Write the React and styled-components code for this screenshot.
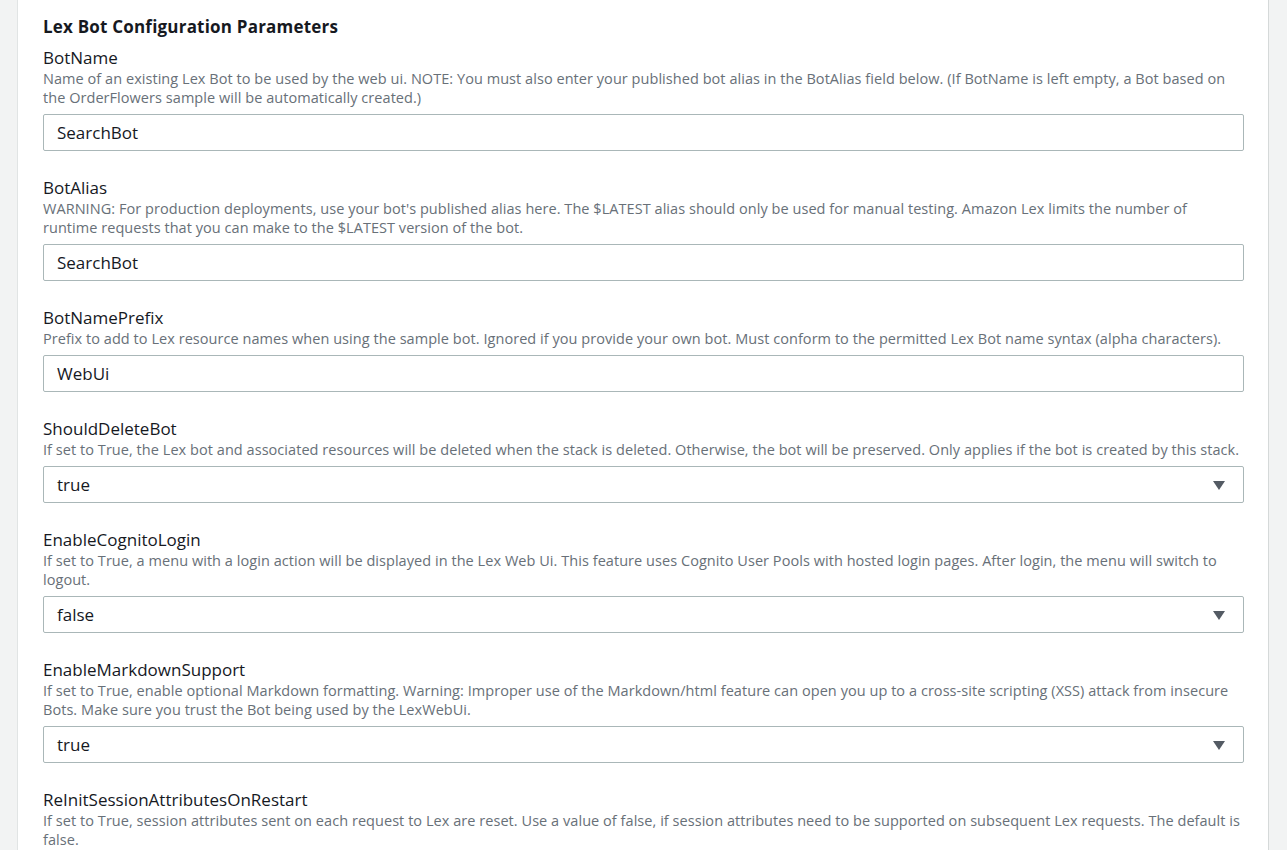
import styled, { createGlobalStyle } from "styled-components";

const GlobalStyle = createGlobalStyle`
  html, body {
    margin: 0;
    padding: 0;
    background: #f2f3f3;
    font-family: "Open Sans", "Noto Sans", sans-serif;
  }
`;

const Page = styled.div`
  display: flex;
  height: 850px;
  overflow: hidden;
  background-color: #f2f3f3;
  background-image: radial-gradient(#fafafa 0.6px, transparent 0.6px);
  background-size: 4px 4px;
`;

const Gutter = styled.div`
  width: ${(p) => p.$w}px;
  flex-shrink: 0;
`;

const Panel = styled.div`
  flex: 1;
  background: #ffffff;
  border-left: 1px solid #e1e4e4;
  border-right: 1px solid #d5d9d9;
  padding: 16px 24px 0 25px;
`;

const Title = styled.h2`
  margin: 0 0 9px;
  font-size: 17px;
  line-height: 22px;
  font-weight: 700;
  letter-spacing: 0.2px;
  color: #16191f;
`;

const Field = styled.div`
  margin-bottom: 26px;
`;

const Label = styled.div`
  font-size: 17px;
  line-height: 22px;
  color: #16191f;
`;

const Description = styled.div`
  font-size: 14.5px;
  line-height: 19px;
  color: #687078;
  letter-spacing: 0.05px;
  margin-bottom: 7px;
`;

const Box = styled.div`
  position: relative;
  display: flex;
  align-items: center;
  height: 37px;
  box-sizing: border-box;
  border: 1px solid #aab7b8;
  border-radius: 2px;
  padding: 0 13px;
  font-size: 17px;
  color: #16191f;
`;

const Arrow = styled.span`
  position: absolute;
  right: 18px;
  top: 50%;
  margin-top: -4px;
  width: 0;
  height: 0;
  border-left: 6px solid transparent;
  border-right: 6px solid transparent;
  border-top: 9px solid #545b64;
`;

const params = [
  {
    name: "BotName",
    desc: "Name of an existing Lex Bot to be used by the web ui. NOTE: You must also enter your published bot alias in the BotAlias field below. (If BotName is left empty, a Bot based on the OrderFlowers sample will be automatically created.)",
    value: "SearchBot",
  },
  {
    name: "BotAlias",
    desc: "WARNING: For production deployments, use your bot's published alias here. The $LATEST alias should only be used for manual testing. Amazon Lex limits the number of runtime requests that you can make to the $LATEST version of the bot.",
    value: "SearchBot",
  },
  {
    name: "BotNamePrefix",
    desc: "Prefix to add to Lex resource names when using the sample bot. Ignored if you provide your own bot. Must conform to the permitted Lex Bot name syntax (alpha characters).",
    value: "WebUi",
  },
  {
    name: "ShouldDeleteBot",
    desc: "If set to True, the Lex bot and associated resources will be deleted when the stack is deleted. Otherwise, the bot will be preserved. Only applies if the bot is created by this stack.",
    value: "true",
    select: true,
  },
  {
    name: "EnableCognitoLogin",
    desc: "If set to True, a menu with a login action will be displayed in the Lex Web Ui. This feature uses Cognito User Pools with hosted login pages. After login, the menu will switch to logout.",
    value: "false",
    select: true,
  },
  {
    name: "EnableMarkdownSupport",
    desc: "If set to True, enable optional Markdown formatting. Warning: Improper use of the Markdown/html feature can open you up to a cross-site scripting (XSS) attack from insecure Bots. Make sure you trust the Bot being used by the LexWebUi.",
    value: "true",
    select: true,
  },
  {
    name: "ReInitSessionAttributesOnRestart",
    desc: "If set to True, session attributes sent on each request to Lex are reset. Use a value of false, if session attributes need to be supported on subsequent Lex requests. The default is false.",
    value: "false",
    select: true,
  },
];

function ParamField({ param }) {
  return (
    <Field>
      <Label>{param.name}</Label>
      <Description>{param.desc}</Description>
      <Box>
        {param.value}
        {param.select && <Arrow />}
      </Box>
    </Field>
  );
}

export default function App() {
  return (
    <>
      <GlobalStyle />
      <Page>
        <Gutter $w={17} />
        <Panel>
          <Title>Lex Bot Configuration Parameters</Title>
          {params.map((p) => (
            <ParamField key={p.name} param={p} />
          ))}
        </Panel>
        <Gutter $w={18} />
      </Page>
    </>
  );
}
